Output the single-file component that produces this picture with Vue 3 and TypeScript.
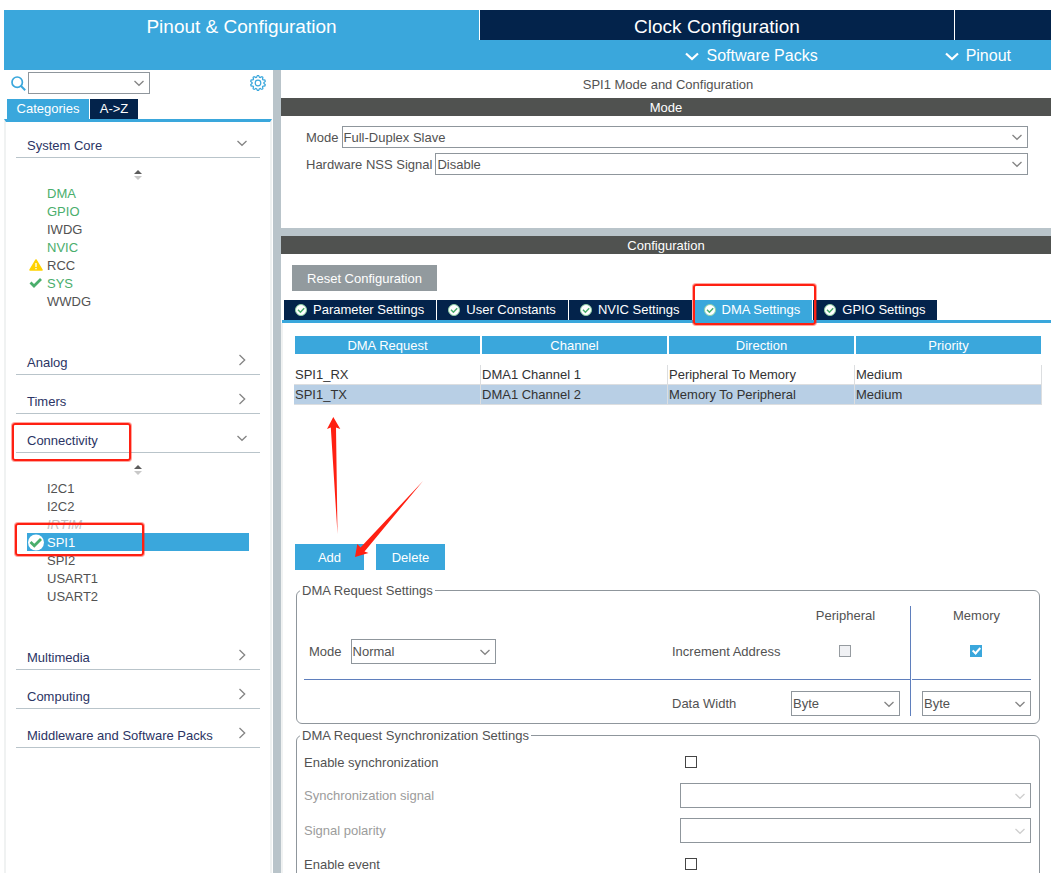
<script setup lang="ts">
import { ref } from 'vue'

type ItemState = 'plain' | 'configured' | 'warning' | 'enabled' | 'unavailable' | 'selected'

interface Item {
  name: string
  state: ItemState
}

interface Category {
  name: string
  open: boolean
  marked?: boolean
  items: Item[]
}

const categories = ref<Category[]>([
  {
    name: 'System Core',
    open: true,
    items: [
      { name: 'DMA', state: 'configured' },
      { name: 'GPIO', state: 'configured' },
      { name: 'IWDG', state: 'plain' },
      { name: 'NVIC', state: 'configured' },
      { name: 'RCC', state: 'warning' },
      { name: 'SYS', state: 'enabled' },
      { name: 'WWDG', state: 'plain' },
    ],
  },
  { name: 'Analog', open: false, items: [] },
  { name: 'Timers', open: false, items: [] },
  {
    name: 'Connectivity',
    open: true,
    marked: true,
    items: [
      { name: 'I2C1', state: 'plain' },
      { name: 'I2C2', state: 'plain' },
      { name: 'IRTIM', state: 'unavailable' },
      { name: 'SPI1', state: 'selected' },
      { name: 'SPI2', state: 'plain' },
      { name: 'USART1', state: 'plain' },
      { name: 'USART2', state: 'plain' },
    ],
  },
  { name: 'Multimedia', open: false, items: [] },
  { name: 'Computing', open: false, items: [] },
  { name: 'Middleware and Software Packs', open: false, items: [] },
])

const tabs = ['Parameter Settings', 'User Constants', 'NVIC Settings', 'DMA Settings', 'GPIO Settings']
const activeTab = ref('DMA Settings')

const columns = ['DMA Request', 'Channel', 'Direction', 'Priority']
const requests = [
  ['SPI1_RX', 'DMA1 Channel 1', 'Peripheral To Memory', 'Medium'],
  ['SPI1_TX', 'DMA1 Channel 2', 'Memory To Peripheral', 'Medium'],
]
const selectedRow = ref(1)

const memoryIncrement = ref(true)
const enableSync = ref(false)
const enableEvent = ref(false)

// Outline of a cog with ten rounded teeth, centred on (8, 8)
function cogPath(): string {
  const points: string[] = []
  for (let i = 0; i < 80; i++) {
    const angle = (i / 80) * Math.PI * 2
    const wave = Math.max(-1, Math.min(1, Math.cos(angle * 10) * 1.8))
    const radius = 6.7 + 0.8 * wave
    points.push(`${(8 + radius * Math.sin(angle)).toFixed(2)} ${(8 - radius * Math.cos(angle)).toFixed(2)}`)
  }
  return `M${points.join('L')}Z`
}
const cog = cogPath()
</script>

<template>
  <div class="app">
    <header class="top">
      <nav class="top-tabs">
        <button class="top-tab current" type="button">Pinout &amp; Configuration</button>
        <button class="top-tab" type="button">Clock Configuration</button>
        <span class="top-tab"></span>
      </nav>
      <div class="top-menus">
        <button v-for="menu in ['Software Packs', 'Pinout']" :key="menu" class="menu" type="button">
          <svg width="14" height="9" viewBox="0 0 14 9"><path d="M1 1.5l6 5.5 6-5.5" fill="none" stroke="#fff" stroke-width="2.2" /></svg>
          {{ menu }}
        </button>
      </div>
    </header>

    <div class="body">
      <aside class="side">
        <div class="search">
          <svg width="15" height="15" viewBox="0 0 15 15" aria-hidden="true">
            <circle cx="6.2" cy="6.2" r="5.2" fill="none" stroke="#3aa7dc" stroke-width="1.7" />
            <path d="M10 10l4.2 4.2" stroke="#3aa7dc" stroke-width="2" />
          </svg>
          <span class="combo search-combo">
            <select aria-label="Search peripherals"><option></option></select>
            <svg class="caret" viewBox="0 0 12 7"><path d="M1.5 1L6 5.3L10.500 1" /></svg>
          </span>
          <button class="gear" type="button" aria-label="Settings">
            <svg width="16" height="16" viewBox="0 0 16 16">
              <path :d="cog" fill="none" stroke="#3aa7dc" stroke-width="1.2" />
              <circle cx="8" cy="8" r="2.8" fill="none" stroke="#3aa7dc" stroke-width="1.2" />
            </svg>
          </button>
        </div>
        <div class="side-tabs">
          <button class="side-tab current" type="button">Categories</button>
          <button class="side-tab" type="button">A-&gt;Z</button>
        </div>
        <div class="tree">
          <section v-for="cat in categories" :key="cat.name" class="category">
            <button class="category-head" type="button" :aria-expanded="cat.open">
              <span>{{ cat.name }}</span>
              <svg v-if="cat.open" class="arrow" width="12" height="12" viewBox="0 0 12 12"><path d="M1.500 4L6 8.300L10.500 4" /></svg>
              <svg v-else class="arrow" width="12" height="12" viewBox="0 0 12 12"><path d="M3.500 1L8.700 6L3.500 11" /></svg>
              <i v-if="cat.marked" class="mark mark-category"></i>
            </button>
            <div v-if="cat.open" class="category-body">
              <svg class="sorter" width="8" height="10" viewBox="0 0 8 10">
                <path d="M0 4L4 0L8 4Z" fill="#5c5c5c" />
                <path d="M0 6L4 10L8 6Z" fill="#c8c8c8" />
              </svg>
              <ul class="items">
                <li v-for="item in cat.items" :key="item.name" class="item" :class="item.state">
                  <span class="item-icon">
                    <svg v-if="item.state === 'warning'" width="14" height="12" viewBox="0 0 14 12">
                      <path d="M7 1L13 11H1Z" fill="#ffd200" stroke="#ffd200" stroke-width="1.500" stroke-linejoin="round" />
                      <path d="M7 4v4M7 9v1.300" stroke="#fff" stroke-width="1.300" />
                    </svg>
                    <svg v-else-if="item.state === 'enabled'" width="14" height="12" viewBox="0 0 14 12">
                      <path d="M1.500 5.500L5 9L12 2" fill="none" stroke="#4aae6c" stroke-width="2.800" />
                    </svg>
                    <svg v-else-if="item.state === 'selected'" width="17" height="17" viewBox="0 0 17 17">
                      <circle cx="9" cy="8.500" r="8" fill="#fff" />
                      <path d="M3.500 8L7.300 11.800L14 5" fill="none" stroke="#4aae6c" stroke-width="2.800" />
                    </svg>
                  </span>
                  <span class="item-name">{{ item.name }}</span>
                  <i v-if="item.state === 'selected'" class="mark mark-item"></i>
                </li>
              </ul>
            </div>
          </section>
        </div>
      </aside>

      <main class="main">
        <h1 class="title">SPI1 Mode and Configuration</h1>
        <section class="mode">
          <h2 class="bar">Mode</h2>
          <div class="mode-rows">
            <div class="mode-row">
              <label for="mode">Mode</label>
              <span class="combo">
                <select id="mode"><option>Full-Duplex Slave</option></select>
                <svg class="caret" viewBox="0 0 12 7"><path d="M1.500 1L6 5.300L10.500 1" /></svg>
              </span>
            </div>
            <div class="mode-row">
              <label for="nss">Hardware NSS Signal</label>
              <span class="combo">
                <select id="nss"><option>Disable</option></select>
                <svg class="caret" viewBox="0 0 12 7"><path d="M1.500 1L6 5.300L10.500 1" /></svg>
              </span>
            </div>
          </div>
        </section>

        <section class="config">
          <h2 class="bar">Configuration</h2>
          <button class="reset" type="button">Reset Configuration</button>
          <div class="tabs" role="tablist">
            <button
              v-for="tab in tabs"
              :key="tab"
              class="tab"
              :class="{ current: tab === activeTab }"
              type="button"
              role="tab"
              :aria-selected="tab === activeTab"
              @click="activeTab = tab"
            >
              <svg width="12" height="12" viewBox="0 0 12 12">
                <circle cx="6" cy="6" r="5.500" fill="#fff" stroke="#8fd0a6" />
                <path d="M3 5.800L5.400 8.200L9.200 4.300" fill="none" stroke="#4aae6c" stroke-width="1.500" />
              </svg>
              {{ tab }}
              <i v-if="tab === 'DMA Settings'" class="mark mark-tab"></i>
            </button>
          </div>

          <div class="pane">
            <div class="table-area">
              <table class="requests">
                <thead>
                  <tr><th v-for="col in columns" :key="col" scope="col">{{ col }}</th></tr>
                </thead>
                <tbody>
                  <tr v-for="(row, i) in requests" :key="row[0]" :class="{ chosen: i === selectedRow }" @click="selectedRow = i">
                    <td v-for="cell in row" :key="cell">{{ cell }}</td>
                  </tr>
                </tbody>
              </table>
            </div>

            <div class="actions">
              <button class="action" type="button">Add</button>
              <button class="action" type="button">Delete</button>
              <svg class="pointers" width="100" height="145" viewBox="0 0 100 145" aria-hidden="true">
                <path d="M8.300 2L2 14L5.800 12.500L12.500 119L11 12.500L15.300 14Z" />
                <path d="M30 142L32.300 129L35.500 132.500L98 66L39.500 136.500L43.500 138Z" />
              </svg>
            </div>

            <fieldset class="group">
              <legend>DMA Request Settings</legend>
              <div class="request-grid">
                <span class="head-peripheral">Peripheral</span>
                <span class="head-memory">Memory</span>
                <div class="dma-mode">
                  <label for="dma-mode">Mode</label>
                  <span class="combo tall">
                    <select id="dma-mode"><option>Normal</option></select>
                    <svg class="caret" viewBox="0 0 12 7"><path d="M1.500 1L6 5.300L10.500 1" /></svg>
                  </span>
                </div>
                <span class="increment">Increment Address</span>
                <input class="check inc-peripheral" type="checkbox" disabled aria-label="Increment peripheral address" />
                <input v-model="memoryIncrement" class="check inc-memory" type="checkbox" aria-label="Increment memory address" />
                <i class="rule-v"></i>
                <i class="rule-left"></i>
                <i class="rule-right"></i>
                <span class="width-label">Data Width</span>
                <span class="combo tall width-peripheral">
                  <select aria-label="Peripheral data width"><option>Byte</option></select>
                  <svg class="caret" viewBox="0 0 12 7"><path d="M1.500 1L6 5.300L10.500 1" /></svg>
                </span>
                <span class="combo tall width-memory">
                  <select aria-label="Memory data width"><option>Byte</option></select>
                  <svg class="caret" viewBox="0 0 12 7"><path d="M1.500 1L6 5.300L10.500 1" /></svg>
                </span>
              </div>
            </fieldset>

            <fieldset class="group">
              <legend>DMA Request Synchronization Settings</legend>
              <div class="sync-grid">
                <label for="sync">Enable synchronization</label>
                <input id="sync" v-model="enableSync" class="check" type="checkbox" />
                <label class="off" for="signal">Synchronization signal</label>
                <span class="combo tall off">
                  <select id="signal" disabled><option></option></select>
                  <svg class="caret" viewBox="0 0 12 7"><path d="M1.500 1L6 5.300L10.500 1" /></svg>
                </span>
                <label class="off" for="polarity">Signal polarity</label>
                <span class="combo tall off">
                  <select id="polarity" disabled><option></option></select>
                  <svg class="caret" viewBox="0 0 12 7"><path d="M1.500 1L6 5.300L10.500 1" /></svg>
                </span>
                <label for="event">Enable event</label>
                <input id="event" v-model="enableEvent" class="check" type="checkbox" />
              </div>
            </fieldset>
          </div>
        </section>
      </main>
    </div>
  </div>
</template>

<style>
body {
  margin: 0;
  background: #fff;
}
</style>

<style scoped>
.app {
  --blue: #3aa7dc;
  --navy: #03234b;
  --slate: #b9c4ca;
  --edge: #8f969c;
  --rule: #5f7fbd;
  --text: #525252;
  box-sizing: border-box;
  display: flex;
  flex-direction: column;
  height: 100vh;
  overflow: hidden;
  padding: 10px 0 0 4px;
  color: var(--text);
  font: 13px/18px "Liberation Sans", Arial, sans-serif;
}

.app *,
.app *::before {
  box-sizing: border-box;
}

button,
select {
  margin: 0;
  padding: 0;
  border: 0;
  border-radius: 0;
  background: none;
  color: inherit;
  font: inherit;
}

svg {
  display: block;
  flex: none;
}

/* Top bar */
.top {
  flex: none;
  background: var(--blue);
  color: #fff;
}

.top-tabs {
  display: grid;
  grid-template-columns: 475fr 474fr 96fr;
  column-gap: 1px;
  height: 30px;
}

.top-tab {
  height: 30px;
  padding-top: 4px;
  background: var(--navy);
  box-shadow: -1px 0 #fff;
  font-size: 19px;
  line-height: 26px;
}

.top-tab.current {
  background: var(--blue);
  box-shadow: none;
}

.top-menus {
  display: flex;
  justify-content: flex-end;
  gap: 127px;
  height: 30px;
  padding-right: 40px;
}

.menu {
  display: flex;
  align-items: center;
  gap: 7px;
  padding-top: 2px;
  font-size: 16px;
}

.body {
  display: flex;
  flex: 1;
  min-height: 0;
}

/* Combo boxes and tick boxes */
.combo {
  position: relative;
  display: block;
  flex: 1;
  height: 22px;
}

.combo.tall {
  height: 25px;
}

.combo select {
  display: block;
  width: 100%;
  height: 100%;
  padding: 0 24px 0 1px;
  border: 1px solid var(--edge);
  background: #fff;
  appearance: none;
  opacity: 1;
}

.caret {
  position: absolute;
  right: 5px;
  top: 50%;
  width: 12px;
  height: 7px;
  margin-top: -3px;
  fill: none;
  stroke: #858585;
  stroke-width: 1.3;
  pointer-events: none;
}

.combo.off .caret {
  stroke: #cfcfcf;
}

.check {
  width: 12px;
  height: 12px;
  margin: 0;
  border: 1px solid #454545;
  background: #fff;
  appearance: none;
}

.check:disabled {
  border-color: #969ba0;
  background: #f0f1f4;
}

.check:checked {
  display: grid;
  place-items: center;
  border-color: var(--blue);
  background: var(--blue);
}

.check:checked::before {
  content: "";
  width: 5px;
  height: 8px;
  margin-top: -2px;
  border: solid #fff;
  border-width: 0 2px 2px 0;
  transform: rotate(42deg);
}

/* Sidebar */
.side {
  display: flex;
  flex: none;
  flex-direction: column;
  width: 269px;
}

.search {
  display: flex;
  align-items: center;
  height: 26px;
  padding: 0 7px;
}

.search-combo {
  flex: none;
  width: 122px;
  margin-left: 2px;
}

.gear {
  margin-left: auto;
}

.side-tabs {
  display: flex;
  gap: 1px;
  height: 23px;
  padding: 3px 0 0 3px;
}

.side-tab {
  width: 48px;
  background: var(--navy);
  color: #fff;
}

.side-tab.current {
  width: 82px;
  background: var(--blue);
}

.tree {
  flex: 1;
  min-height: 0;
  margin-right: 1px;
  padding: 0 10px;
  overflow: auto;
  scrollbar-width: none;
  border: solid #f0f2f2;
  border-width: 0 2px;
  border-top: 3px solid var(--blue);
}

.category {
  margin-bottom: 3px;
}

.category-head {
  position: relative;
  display: flex;
  align-items: center;
  justify-content: space-between;
  width: 100%;
  height: 36px;
  padding: 12px 12px 0 11px;
  border-bottom: 1px solid var(--slate);
  color: #2b3464;
}

.arrow {
  margin-bottom: 5px;
  fill: none;
  stroke: #858585;
  stroke-width: 1.3;
}

.category-body {
  padding: 12px 0 26px;
}

.sorter {
  margin: 0 auto 4px;
}

.items {
  margin: 0 11px;
  padding: 0;
  list-style: none;
}

.item {
  position: relative;
  display: flex;
  align-items: center;
  height: 18px;
}

.item-icon {
  display: flex;
  flex: none;
  justify-content: center;
  width: 17px;
  margin-right: 3px;
}

.item-name {
  padding-top: 2px;
}

.item.configured,
.item.enabled {
  color: #4aae6c;
}

.item.unavailable {
  color: #c2c2c2;
  font-style: italic;
}

.item.selected {
  background: var(--blue);
  color: #fff;
}

/* Red annotations */
.mark {
  position: absolute;
  z-index: 2;
  border: 2px solid #ff2012;
  border-radius: 3px;
  box-shadow: 0 0 0 1px rgba(255, 32, 18, 0.4);
  pointer-events: none;
}

.mark-category {
  left: -4px;
  top: 6px;
  width: 119px;
  height: 38px;
}

.mark-item {
  left: -12px;
  top: -10px;
  width: 129px;
  height: 33px;
}

.mark-tab {
  inset: -16px -4px -5px 0;
}

.pointers {
  position: absolute;
  left: 30px;
  top: -129px;
  fill: #ff2012;
  pointer-events: none;
}

/* Main area */
.main {
  display: flex;
  flex: 1;
  flex-direction: column;
  min-width: 0;
  border-left: 8px solid var(--slate);
}

.title {
  flex: none;
  height: 28px;
  margin: 0;
  padding: 2px 0 0 4px;
  font-size: 13px;
  font-weight: 400;
  line-height: 26px;
  text-align: center;
}

.bar {
  flex: none;
  margin: 0;
  padding-top: 2px;
  background: #505250;
  color: #fff;
  font-size: 13px;
  font-weight: 400;
  line-height: 16px;
  text-align: center;
}

.mode {
  flex: none;
  border-bottom: 8px solid var(--slate);
}

.mode-rows {
  display: grid;
  gap: 5px;
  padding: 10px 23px 53px 25px;
}

.mode-row {
  display: flex;
  align-items: center;
  gap: 3px;
}

.mode-row label,
.mode-row select {
  padding-top: 2px;
}

.config {
  display: flex;
  flex: 1;
  flex-direction: column;
  align-items: stretch;
  min-height: 0;
}

.reset {
  flex: none;
  align-self: flex-start;
  width: 145px;
  height: 26px;
  margin: 11px 0 9px 11px;
  padding-top: 1px;
  background: #929a9e;
  color: #fff;
}

.tabs {
  display: flex;
  flex: none;
  gap: 1px;
  height: 23px;
  margin-left: 1px;
  padding-left: 2px;
  border-bottom: 3px solid var(--blue);
}

.tab {
  position: relative;
  display: flex;
  align-items: center;
  gap: 6px;
  padding: 0 12px 0 11px;
  background: var(--navy);
  color: #fff;
}

.tab.current {
  background: var(--blue);
}

.pane {
  flex: 1;
  min-height: 0;
  padding: 13px 9px 12px 11px;
  overflow: auto;
  scrollbar-width: none;
  border-left: 2px solid #f0f2f2;
}

.table-area {
  min-height: 208px;
}

.requests {
  width: 100%;
  border-spacing: 0;
  table-layout: fixed;
  color: #333;
}

.requests th {
  height: 29px;
  padding: 1px 0 0;
  border: solid #fff;
  border-width: 0 1px 11px;
  background: var(--blue);
  color: #fff;
  font-weight: 400;
  line-height: 17px;
}

.requests td {
  height: 20px;
  padding: 0 1px;
  border: solid #dcdee0;
  border-width: 0 1px 1px 0;
}

.chosen td {
  background: #b8cfe5;
}

.actions {
  position: relative;
  display: flex;
  gap: 12px;
  margin: 0 0 12px 1px;
}

.action {
  width: 69px;
  height: 26px;
  padding-top: 1px;
  background: var(--blue);
  color: #fff;
}

.group {
  min-width: 0;
  margin: 0 2px 3px;
  padding: 8px 8px 7px 7px;
  border: 1px solid var(--edge);
  border-radius: 6px;
}

.group legend {
  margin-left: -4px;
  padding: 2px 2px 0;
  line-height: 14px;
}

.request-grid {
  display: grid;
  grid-template-columns: 1fr 119px 109px 22px 109px;
  grid-template-rows: 18px 55px 1px 36px;
  align-items: center;
}

.head-peripheral,
.head-memory {
  justify-self: center;
  padding-top: 2px;
}

.head-peripheral {
  grid-area: 1 / 3;
}

.head-memory {
  grid-area: 1 / 5;
}

.dma-mode {
  display: flex;
  grid-area: 2 / 1;
  align-items: center;
  gap: 9px;
  width: 192px;
  padding-left: 5px;
}

.increment {
  grid-area: 2 / 2;
}

.request-grid .check {
  margin: 0 1px 1px 0;
}

.inc-peripheral {
  grid-area: 2 / 3;
  justify-self: center;
}

.inc-memory {
  grid-area: 2 / 5;
  justify-self: center;
}

.rule-v {
  grid-area: 1 / 4 / 5 / 5;
  align-self: stretch;
  width: 1px;
  margin-left: 10px;
  background: var(--rule);
}

.rule-left {
  grid-area: 3 / 1 / 4 / 5;
  height: 1px;
  margin-right: 12px;
  background: var(--rule);
}

.rule-right {
  grid-area: 3 / 4 / 4 / 6;
  height: 1px;
  margin-left: 12px;
  background: var(--rule);
}

.width-label {
  grid-area: 4 / 2;
  align-self: end;
  line-height: 25px;
}

.width-peripheral {
  grid-area: 4 / 3;
  align-self: end;
}

.width-memory {
  grid-area: 4 / 5;
  align-self: end;
}

.sync-grid {
  display: grid;
  grid-template-columns: 376fr 351fr;
  grid-auto-rows: minmax(22px, auto);
  row-gap: 10px;
  align-items: center;
}

.sync-grid label {
  padding-top: 1px;
}

.sync-grid .check {
  margin-left: 5px;
}

.sync-grid label.off {
  color: #9c9c9c;
}
</style>
